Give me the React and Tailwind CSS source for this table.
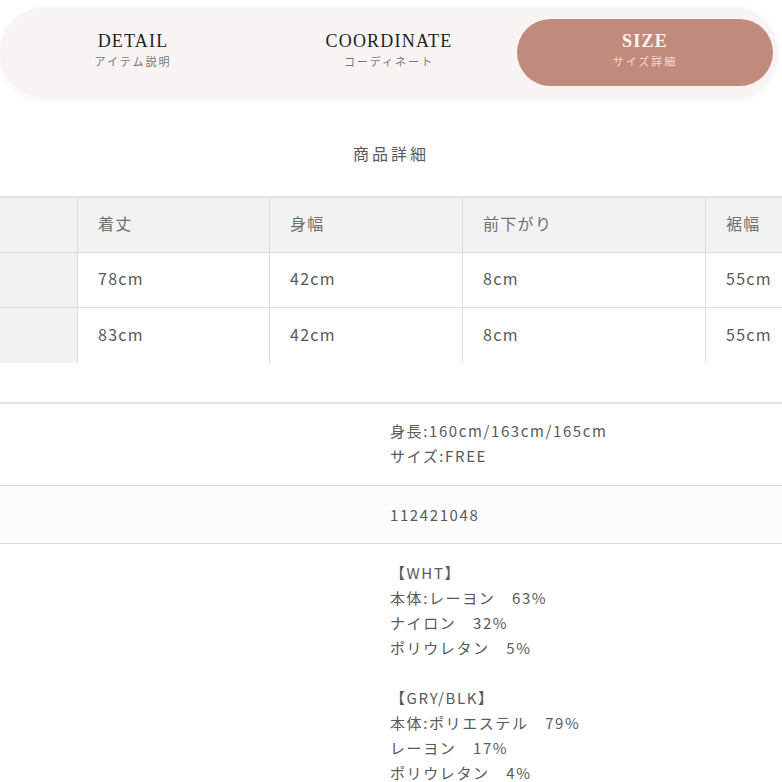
import React from "react";

const tabs = [
  { en: "DETAIL", ja: "アイテム説明", active: false },
  { en: "COORDINATE", ja: "コーディネート", active: false },
  { en: "SIZE", ja: "サイズ詳細", active: true },
];

const headers = ["", "着丈", "身幅", "前下がり", "裾幅"];
const rows = [
  ["", "78cm", "42cm", "8cm", "55cm"],
  ["", "83cm", "42cm", "8cm", "55cm"],
];
const widths = ["w-[78px]", "w-[192px]", "w-[193px]", "w-[243px]", "w-[120px]"];

function Cell({ i, header, children }) {
  const bg = header || i === 0 ? "bg-[#f2f2f2]" : "bg-white";
  const border = i < 4 ? "border-r border-[#dcdcdc]" : "";
  return (
    <div
      className={`${widths[i]} shrink-0 h-full flex items-center pl-[20px] pb-[4px] ${bg} ${border} ${
        header ? "text-[#707070]" : "text-[#5a5a5a]"
      }`}
    >
      {children}
    </div>
  );
}

export default function App() {
  return (
    <div className="w-[782px] min-h-[782px] bg-white overflow-hidden font-['Noto_Sans_CJK_JP',sans-serif]">
      {/* Tabs */}
      <div className="pt-[7px]">
        <div className="w-[778px] h-[91px] rounded-full bg-[#f8f4f3] shadow-[0_2px_8px_rgba(0,0,0,0.05)] px-[5px] py-[12px] flex">
          {tabs.map((t) => (
            <div
              key={t.en}
              className={`flex-1 flex flex-col items-center justify-center pb-[6px] rounded-full ${
                t.active ? "bg-[#c08a7d]" : ""
              }`}
            >
              <div
                className={`font-['Liberation_Serif',serif] text-[18px] leading-[22px] tracking-[1.2px] ${
                  t.active ? "text-[#fdf4f0] font-bold" : "text-[#222]"
                }`}
              >
                {t.en}
              </div>
              <div
                className={`text-[11px] leading-[16px] tracking-[2px] mt-[1px] ${
                  t.active ? "text-[#f8d9cf]" : "text-[#777]"
                }`}
              >
                {t.ja}
              </div>
            </div>
          ))}
        </div>
      </div>

      {/* Title */}
      <div className="mt-[43px] mb-[31px] text-center text-[16px] leading-[24px] tracking-[3px] text-[#5a5a5a]">
        商品詳細
      </div>

      {/* Size table */}
      <div className="border-t-2 border-[#e3e3e3] text-[16px] tracking-[1.3px]">
        <div className="flex h-[55px] border-b border-[#dcdcdc]">
          {headers.map((h, i) => (
            <Cell key={i} i={i} header>
              {h}
            </Cell>
          ))}
        </div>
        {rows.map((r, ri) => (
          <div
            key={ri}
            className={`flex h-[55px] ${ri < rows.length - 1 ? "border-b border-[#dcdcdc]" : ""}`}
          >
            {r.map((c, i) => (
              <Cell key={i} i={i}>
                {c}
              </Cell>
            ))}
          </div>
        ))}
      </div>

      {/* Spec table */}
      <div className="mt-[39px] border-t-2 border-[#e3e3e3] text-[15px] leading-[25px] tracking-[1.6px] text-[#5a5a5a]">
        <div className="flex pt-[14px] pb-[17px] border-b border-[#d8d8d8]">
          <div className="w-[390px] shrink-0" />
          <div>
            <div>身長:160cm/163cm/165cm</div>
            <div>サイズ:FREE</div>
          </div>
        </div>
        <div className="flex h-[58px] items-center pb-[1px] bg-[#fcfcfc] border-b border-[#d8d8d8]">
          <div className="w-[390px] shrink-0" />
          <div>112421048</div>
        </div>
        <div className="flex pt-[16px] pb-[20px]">
          <div className="w-[390px] shrink-0" />
          <div>
            <div>【WHT】</div>
            <div>本体:レーヨン　63%</div>
            <div>ナイロン　32%</div>
            <div>ポリウレタン　5%</div>
            <div>&nbsp;</div>
            <div>【GRY/BLK】</div>
            <div>本体:ポリエステル　79%</div>
            <div>レーヨン　17%</div>
            <div>ポリウレタン　4%</div>
          </div>
        </div>
      </div>
    </div>
  );
}
